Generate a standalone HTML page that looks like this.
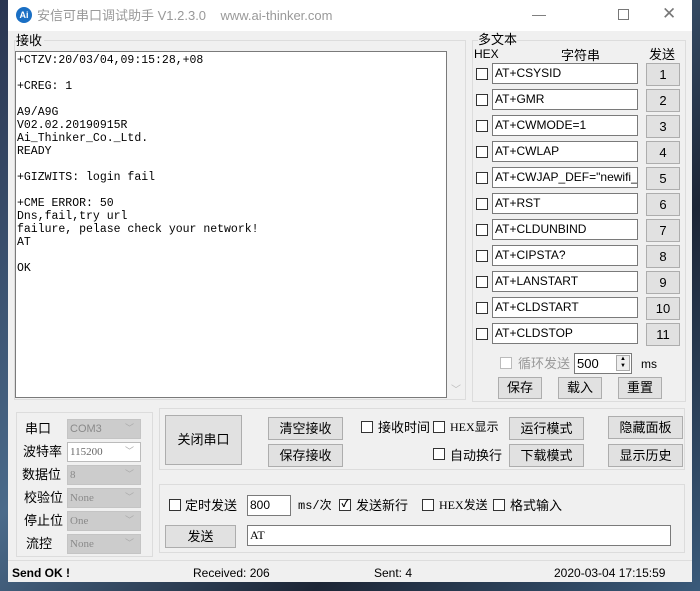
<!DOCTYPE html>
<html><head><meta charset="utf-8"><style>
*{box-sizing:border-box}
body{margin:0;width:700px;height:591px;overflow:hidden;background:linear-gradient(135deg,#2a3550,#4a6a8a 40%,#1c2535 70%,#3a5a7a);font-family:"Liberation Sans","Noto Sans CJK SC",sans-serif;font-size:12px;color:#000;position:relative;line-height:15px}
.a{position:absolute}
.win{position:absolute;left:8px;top:0;width:684px;height:582px;background:#f0f0f0}
.title{position:absolute;left:8px;top:0;width:684px;height:31px;background:#fff}
.btn{position:absolute;border:1px solid #adadad;background:#e1e1e1;text-align:center;font-size:13px}
.inp{position:absolute;border:1px solid #7a7a7a;background:#fff;padding-left:2px;font-size:12px}
.cb{position:absolute;width:12px;height:12px;border:1px solid #333;background:#fff}
.grp{position:absolute;border:1px solid #dcdcdc}
.combo{position:absolute;left:67px;width:74px;height:20px;background:#ccc;border:1px solid #c4c4c4;color:#8a8a8a;font-family:"Liberation Serif",serif;font-size:11px;padding:2px 0 0 2px}
.combo:after{content:"﹀";position:absolute;right:6px;top:1px;font-size:9px;color:#aaa}
.lbl{position:absolute;font-size:13px}
.mono{font-family:"Liberation Mono","Noto Sans CJK SC",monospace}
</style></head><body>
<div class="win"></div>
<div class="title"></div>
<div class="a" style="left:16px;top:7px;width:16px;height:16px;border-radius:50%;background:#1a6fc4;color:#fff;font-size:9px;text-align:center;line-height:16px;font-weight:bold">Ai</div>
<div class="a" style="left:37px;top:8px;color:#999;font-size:13px">安信可串口调试助手 V1.2.3.0&nbsp;&nbsp;&nbsp;&nbsp;www.ai-thinker.com</div>
<div class="a" style="left:532px;top:7px;color:#777;font-size:14px">—</div>
<div class="a" style="left:618px;top:9px;width:11px;height:11px;border:1px solid #777"></div>
<div class="a" style="left:662px;top:6px;color:#777;font-size:17px">✕</div>

<div class="grp" style="left:14px;top:40px;width:452px;height:360px"></div>
<div class="a" style="left:16px;top:33px;font-size:13px;background:#f0f0f0;padding-right:2px">接收</div>
<div class="a mono" style="left:15px;top:51px;width:432px;height:347px;background:#fff;border:1px solid #7a7a7a;font-size:11.5px;line-height:13px;padding:2px 1px;white-space:pre">+CTZV:20/03/04,09:15:28,+08

+CREG: 1

A9/A9G
V02.02.20190915R
Ai_Thinker_Co._Ltd.
READY

+GIZWITS: login fail

+CME ERROR: 50
Dns,fail,try url
failure, pelase check your network!
AT

OK</div>
<div class="a" style="left:451px;top:383px;color:#bbb;font-size:10px">﹀</div>

<div class="grp" style="left:472px;top:40px;width:214px;height:362px"></div>
<div class="a" style="left:478px;top:32px;font-size:13px;background:#f0f0f0">多文本</div>
<div class="a" style="left:474px;top:47px;font-size:12px">HEX</div>
<div class="a" style="left:561px;top:48px;font-size:13px">字符串</div>
<div class="a" style="left:649px;top:47px;font-size:13px">发送</div>

<div class="cb" style="left:476px;top:68px"></div><div class="inp" style="left:492px;top:63px;width:146px;height:21px;line-height:19px">AT+CSYSID</div><div class="btn" style="left:646px;top:63px;width:34px;height:23px;line-height:22px">1</div>
<div class="cb" style="left:476px;top:94px"></div><div class="inp" style="left:492px;top:89px;width:146px;height:21px;line-height:19px">AT+GMR</div><div class="btn" style="left:646px;top:89px;width:34px;height:23px;line-height:22px">2</div>
<div class="cb" style="left:476px;top:120px"></div><div class="inp" style="left:492px;top:115px;width:146px;height:21px;line-height:19px">AT+CWMODE=1</div><div class="btn" style="left:646px;top:115px;width:34px;height:23px;line-height:22px">3</div>
<div class="cb" style="left:476px;top:146px"></div><div class="inp" style="left:492px;top:141px;width:146px;height:21px;line-height:19px">AT+CWLAP</div><div class="btn" style="left:646px;top:141px;width:34px;height:23px;line-height:22px">4</div>
<div class="cb" style="left:476px;top:172px"></div><div class="inp" style="left:492px;top:167px;width:146px;height:21px;line-height:19px;overflow:hidden;white-space:nowrap">AT+CWJAP_DEF="newifi_</div><div class="btn" style="left:646px;top:167px;width:34px;height:23px;line-height:22px">5</div>
<div class="cb" style="left:476px;top:198px"></div><div class="inp" style="left:492px;top:193px;width:146px;height:21px;line-height:19px">AT+RST</div><div class="btn" style="left:646px;top:193px;width:34px;height:23px;line-height:22px">6</div>
<div class="cb" style="left:476px;top:224px"></div><div class="inp" style="left:492px;top:219px;width:146px;height:21px;line-height:19px">AT+CLDUNBIND</div><div class="btn" style="left:646px;top:219px;width:34px;height:23px;line-height:22px">7</div>
<div class="cb" style="left:476px;top:250px"></div><div class="inp" style="left:492px;top:245px;width:146px;height:21px;line-height:19px">AT+CIPSTA?</div><div class="btn" style="left:646px;top:245px;width:34px;height:23px;line-height:22px">8</div>
<div class="cb" style="left:476px;top:276px"></div><div class="inp" style="left:492px;top:271px;width:146px;height:21px;line-height:19px">AT+LANSTART</div><div class="btn" style="left:646px;top:271px;width:34px;height:23px;line-height:22px">9</div>
<div class="cb" style="left:476px;top:302px"></div><div class="inp" style="left:492px;top:297px;width:146px;height:21px;line-height:19px">AT+CLDSTART</div><div class="btn" style="left:646px;top:297px;width:34px;height:23px;line-height:22px">10</div>
<div class="cb" style="left:476px;top:328px"></div><div class="inp" style="left:492px;top:323px;width:146px;height:21px;line-height:19px">AT+CLDSTOP</div><div class="btn" style="left:646px;top:323px;width:34px;height:23px;line-height:22px">11</div>

<div class="cb" style="left:500px;top:357px;border-color:#bbb"></div>
<div class="a" style="left:518px;top:356px;color:#999;font-size:13px">循环发送</div>
<div class="inp" style="left:574px;top:353px;width:58px;height:21px;line-height:19px;font-size:13px">500</div>
<div class="a" style="left:616px;top:355px;width:14px;height:16px;border:1px solid #aaa;background:#eee;font-size:6px;line-height:7px;text-align:center">▲<br>▼</div>
<div class="a" style="left:641px;top:357px;font-size:12px">ms</div>
<div class="btn" style="left:498px;top:377px;width:44px;height:22px;line-height:20px">保存</div>
<div class="btn" style="left:558px;top:377px;width:44px;height:22px;line-height:20px">载入</div>
<div class="btn" style="left:618px;top:377px;width:44px;height:22px;line-height:20px">重置</div>

<div class="grp" style="left:16px;top:412px;width:137px;height:145px"></div>
<div class="lbl" style="left:25px;top:421px">串口</div><div class="combo" style="left:67px;top:419px;font-family:'Liberation Sans'">COM3</div>
<div class="lbl" style="left:23px;top:444px">波特率</div><div class="combo" style="left:67px;top:442px;background:#fff;border-color:#bbb;color:#666">115200</div>
<div class="lbl" style="left:22px;top:467px">数据位</div><div class="combo" style="left:67px;top:465px">8</div>
<div class="lbl" style="left:24px;top:490px">校验位</div><div class="combo" style="left:67px;top:488px">None</div>
<div class="lbl" style="left:24px;top:513px">停止位</div><div class="combo" style="left:67px;top:511px">One</div>
<div class="lbl" style="left:26px;top:536px">流控</div><div class="combo" style="left:67px;top:534px">None</div>

<div class="grp" style="left:159px;top:408px;width:526px;height:62px"></div>
<div class="btn" style="left:165px;top:415px;width:77px;height:50px;line-height:48px">关闭串口</div>
<div class="btn" style="left:268px;top:417px;width:75px;height:23px;line-height:21px">清空接收</div>
<div class="btn" style="left:268px;top:444px;width:75px;height:23px;line-height:21px">保存接收</div>
<div class="cb" style="left:361px;top:421px"></div><div class="lbl" style="left:378px;top:420px">接收时间</div>
<div class="cb" style="left:433px;top:421px"></div><div class="a" style="left:450px;top:420px;font-size:12px;font-family:'Liberation Serif','Noto Sans CJK SC',serif">HEX显示</div>
<div class="cb" style="left:433px;top:448px"></div><div class="lbl" style="left:450px;top:448px">自动换行</div>
<div class="btn" style="left:509px;top:417px;width:75px;height:23px;line-height:21px">运行模式</div>
<div class="btn" style="left:509px;top:444px;width:75px;height:23px;line-height:21px">下载模式</div>
<div class="btn" style="left:608px;top:416px;width:75px;height:23px;line-height:21px">隐藏面板</div>
<div class="btn" style="left:608px;top:444px;width:75px;height:23px;line-height:21px">显示历史</div>

<div class="grp" style="left:159px;top:484px;width:526px;height:69px"></div>
<div class="cb" style="left:169px;top:499px"></div><div class="lbl" style="left:185px;top:498px">定时发送</div>
<div class="inp" style="left:247px;top:495px;width:44px;height:21px;line-height:18px">800</div>
<div class="a mono" style="left:298px;top:499px;font-size:12px">ms/次</div>
<div class="cb" style="left:339px;top:499px;font-size:10px;line-height:10px;text-align:center;font-weight:bold">✓</div><div class="lbl" style="left:356px;top:498px">发送新行</div>
<div class="cb" style="left:422px;top:499px"></div><div class="a" style="left:439px;top:498px;font-size:12px;font-family:'Liberation Serif','Noto Sans CJK SC',serif">HEX发送</div>
<div class="cb" style="left:493px;top:499px"></div><div class="lbl" style="left:510px;top:498px">格式输入</div>
<div class="btn" style="left:165px;top:525px;width:71px;height:23px;line-height:21px">发送</div>
<div class="inp" style="left:247px;top:525px;width:424px;height:21px;line-height:18px;font-family:'Liberation Serif',serif">AT</div>

<div class="a" style="left:8px;top:560px;width:684px;height:1px;background:#ddd"></div>
<div class="a" style="left:12px;top:566px;font-weight:bold;font-size:12px">Send OK !</div>
<div class="a" style="left:193px;top:566px;font-size:12px">Received: 206</div>
<div class="a" style="left:374px;top:566px;font-size:12px">Sent: 4</div>
<div class="a" style="left:554px;top:566px;font-size:12px">2020-03-04 17:15:59</div>
</body></html>
